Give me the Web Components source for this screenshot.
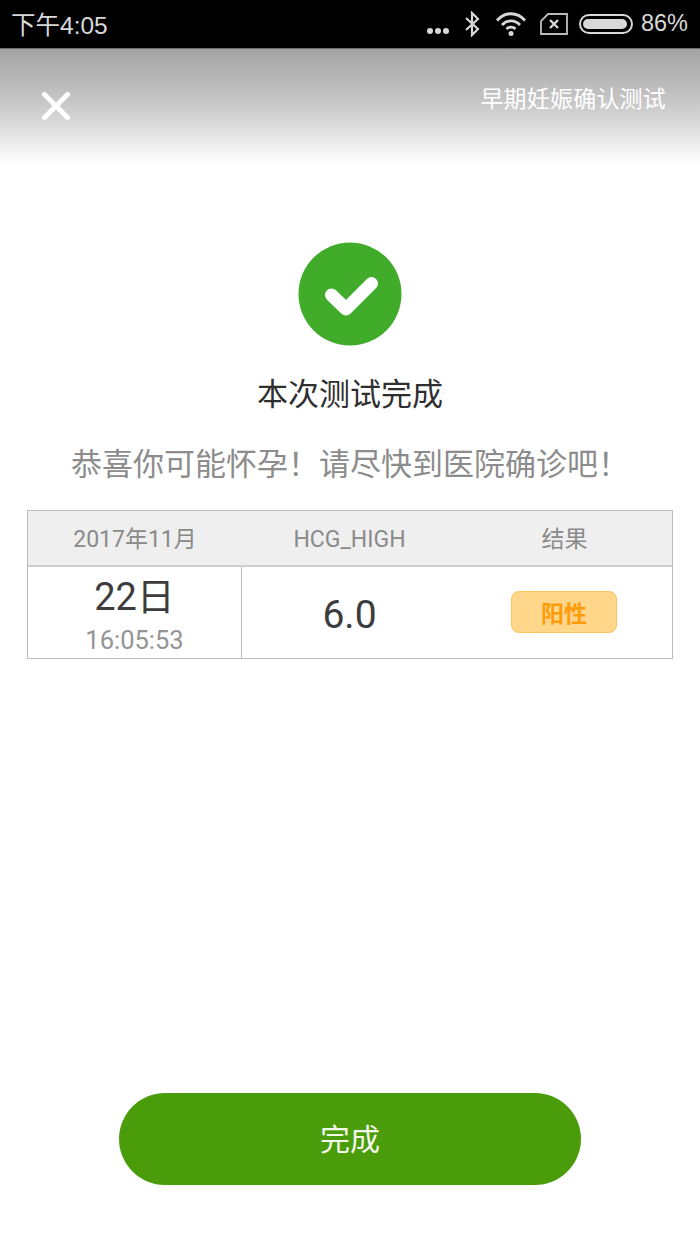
<!DOCTYPE html>
<html lang="zh-CN">
<head>
<meta charset="utf-8">
<title>本次测试完成</title>
<style>
html,body{margin:0;padding:0;background:#fff;}
body{width:700px;height:1244px;overflow:hidden;font-family:Roboto,"Noto Sans CJK SC",sans-serif;}
</style>
</head>
<body>
<result-app>
  <status-bar slot="status"></status-bar>
  <nav-header slot="header" heading="早期妊娠确认测试"></nav-header>
  <result-summary slot="summary" title-text="本次测试完成" message="恭喜你可能怀孕&#xFF01;请尽快到医院确诊吧&#xFF01;"></result-summary>
  <result-table slot="table"></result-table>
  <done-button slot="action">完成</done-button>
</result-app>
<script>
function shadow(el, html){ el.attachShadow({mode:'open'}).innerHTML = html; }
const FONT = 'Roboto,"Noto Sans CJK SC",sans-serif';

customElements.define('result-app', class extends HTMLElement{
  connectedCallback(){ if(this.shadowRoot) return; shadow(this, `<style>
    :host{display:flex;flex-direction:column;width:700px;height:1244px;font-family:${FONT};background:#fff}
    .t{display:block;margin:0 27px}
    .a{display:block;margin-top:auto;padding-bottom:59px}
  </style>
  <slot name="status"></slot><slot name="header"></slot><slot name="summary"></slot>
  <div class="t"><slot name="table"></slot></div>
  <div class="a"><slot name="action"></slot></div>`); }
});

customElements.define('status-bar', class extends HTMLElement{
  connectedCallback(){ if(this.shadowRoot) return; shadow(this, `<style>
    :host{display:flex;align-items:center;height:48px;background:#000;color:#d8d8d8;font:24.500px "Liberation Sans","Noto Sans CJK SC",sans-serif;padding:0 12px;width:676px;border-bottom:1px solid #6e6e6e}
    .time{margin-left:-1px;padding-bottom:2px}
    .right{margin-left:auto;display:flex;align-items:center}
    svg{display:block}
    .pct{margin-left:8px;font-size:23.500px;padding-bottom:2px}
  </style>
  <span class="time">下午4:05</span>
  <div class="right">
    <svg width="26" height="12" viewBox="0 0 26 12" style="margin-top:14px"><circle cx="5" cy="6" r="3" fill="#d8d8d8"/><circle cx="13" cy="6" r="3" fill="#d8d8d8"/><circle cx="21" cy="6" r="3" fill="#d8d8d8"/></svg>
    <svg width="18" height="26" viewBox="0 0 18 26" style="margin-left:12px"><path d="M3 7l12 11-6 6V2l6 6L3 19" fill="none" stroke="#d8d8d8" stroke-width="2.2"/></svg>
    <svg width="32" height="24" viewBox="0 0 32 24" style="margin-left:14px"><path d="M2 8.500C10-.5 22-.5 30 8.500M7 13C12 7.500 20 7.500 25 13M11.500 17C14 14.500 18 14.500 20.500 17" fill="none" stroke="#d8d8d8" stroke-width="2.800"/><circle cx="16" cy="21.500" r="2.500" fill="#d8d8d8"/></svg>
    <svg width="28" height="22" viewBox="0 0 28 22" style="margin-left:13px"><path d="M8 1H27V21H1V8Z" fill="none" stroke="#bdbdbd" stroke-width="1.800"/><path d="M10 7l8 8M18 7l-8 8" stroke="#d8d8d8" stroke-width="2.400"/></svg>
    <svg width="54" height="20" viewBox="0 0 54 20" style="margin-left:11px"><rect x="1" y="1" width="52" height="18" rx="9" fill="none" stroke="#d8d8d8" stroke-width="2"/><path d="M9 5H43a5 5 0 0 1 0 10H9a5 5 0 0 1 0-10Z" fill="#d8d8d8"/></svg>
    <span class="pct">86%</span>
  </div>`); }
});

customElements.define('nav-header', class extends HTMLElement{
  connectedCallback(){ if(this.shadowRoot) return; shadow(this, `<style>
    :host{display:flex;justify-content:space-between;align-items:flex-start;height:116px;background:linear-gradient(#a3a3a3 0%,#c6c6c6 45%,#fff 100%);color:#fff;padding:0 34px 0 41px}
    svg{display:block;margin-top:43px}
    .h{font-size:23px;line-height:32px;margin-top:35px;letter-spacing:.2px}
  </style>
  <svg width="30" height="28" viewBox="0 0 30 28" aria-label="关闭"><path d="M3.500 2.500L26.500 25.500M26.500 2.500L3.500 25.500" stroke="#fff" stroke-width="5" stroke-linecap="round"/></svg>
  <span class="h">${this.getAttribute('heading')}</span>`); }
});

customElements.define('result-summary', class extends HTMLElement{
  connectedCallback(){ if(this.shadowRoot) return; shadow(this, `<style>
    :host{display:flex;flex-direction:column;align-items:center;padding-top:77px;height:345px;box-sizing:border-box}
    svg{display:block}
    .t{font-size:31px;line-height:44px;color:#2f2f2f;margin-top:27px}
    .m{font-size:31px;line-height:44px;color:#8c8c8c;margin-top:26px;white-space:nowrap}
  </style>
  <svg width="104" height="104" viewBox="0 0 104 104"><circle cx="52" cy="52" r="51.500" fill="#40ac2a"/><path d="M33.500 53L48 67L73.500 41.500" fill="none" stroke="#fff" stroke-width="13" stroke-linecap="round" stroke-linejoin="round"/></svg>
  <div class="t">${this.getAttribute('title-text')}</div>
  <div class="m">${this.getAttribute('message')}</div>`); }
});

customElements.define('result-table', class extends HTMLElement{
  connectedCallback(){ if(this.shadowRoot) return; shadow(this, `<style>
    :host{display:block;width:646px;box-sizing:border-box;border:1px solid #bdbdbd;font-family:${FONT}}
    .row{display:grid;grid-template-columns:214px 1fr 215px}
    .head{height:54px;background:#efefef;border-bottom:2px solid #cfcfcf;color:#8a8a8a;font-size:23px;line-height:58px;text-align:center}
    .body{height:91px}
    .c{display:flex;flex-direction:column;align-items:center;justify-content:center}
    .date{border-right:1px solid #bdbdbd;padding-top:5px}
    .d{font-size:38px;line-height:46px;color:#3c3c3c;margin-top:-2px}
    .s{font-size:25.500px;line-height:30px;color:#949494;margin-top:5px}
    .v{font-size:39px;color:#3c3c3c;padding-top:4px}
    .badge{width:106px;height:42px;box-sizing:border-box;border:1px solid #fbc25e;border-radius:8px;background:#ffd68a;color:#ff9c0a;font-size:23px;font-weight:700;display:flex;align-items:center;justify-content:center;margin-top:-1px;margin-left:-1px}
  </style>
  <div class="row head"><div>2017年11月</div><div>HCG_HIGH</div><div>结果</div></div>
  <div class="row body">
    <div class="c date"><span class="d">22日</span><span class="s">16:05:53</span></div>
    <div class="c"><span class="v">6.0</span></div>
    <div class="c"><span class="badge">阳性</span></div>
  </div>`); }
});

customElements.define('done-button', class extends HTMLElement{
  connectedCallback(){ if(this.shadowRoot) return; shadow(this, `<style>
    :host{display:flex;justify-content:center}
    button{all:unset;display:flex;align-items:center;justify-content:center;width:462px;height:90px;padding-top:2px;border-radius:46px;background:#4a9c0b;color:#f2f7ea;font:30px/88px ${FONT}}
  </style><button><slot></slot></button>`); }
});
</script>
</body>
</html>
